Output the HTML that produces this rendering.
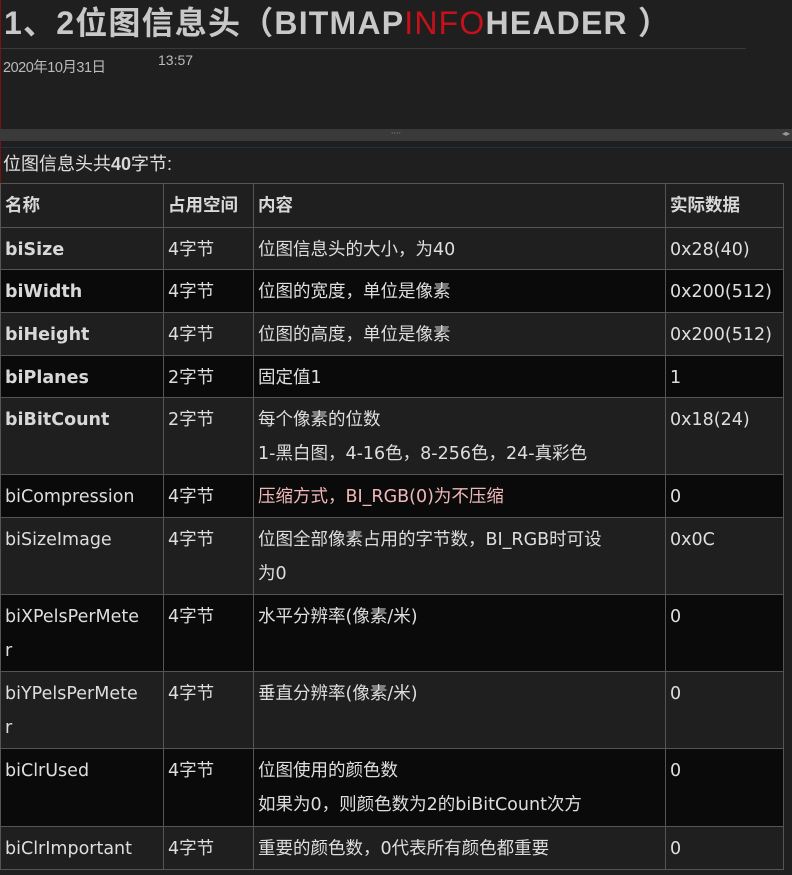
<!DOCTYPE html>
<html><head><meta charset="utf-8"><style>
body{margin:0;width:792px;height:875px;background:#1f1f1f;overflow:hidden;font-family:"DejaVu Sans","Noto Sans CJK SC",sans-serif;color:#dcdcdc;position:relative}
.title{position:absolute;left:4px;top:-2px;font-family:"Liberation Sans","Noto Sans CJK SC",sans-serif;font-size:32px;font-weight:bold;color:#c8c8c8;white-space:nowrap;letter-spacing:1.2px}
.title .r{color:#c8101a;font-weight:normal}
.sep{position:absolute;left:0;top:48px;width:746px;height:1px;background:#3a3a3a}
.date{position:absolute;left:3px;top:56px;font-size:14.5px;color:#bbb;font-family:"Liberation Sans","Noto Sans CJK SC",sans-serif;letter-spacing:-0.5px}
.time{position:absolute;left:158px;top:52px;font-size:14px;color:#bbb;font-family:"Liberation Sans",sans-serif}
.redl{position:absolute;left:0;top:0;width:1px;height:183px;background:#7a1010}
.bar{position:absolute;left:0;top:129px;width:792px;height:12px;background:#3a3a3a;font-size:8px;color:#999;text-align:center;line-height:10px}
.bar span{position:absolute;right:2px;top:0}
.blue{position:absolute;left:0;top:147px;width:792px;height:1px;background:#1e3248}
.intro{position:absolute;left:3px;top:150px;font-size:18px;line-height:28px;color:#e0e0e0;font-family:"Liberation Sans","Noto Sans CJK SC",sans-serif}
table{position:absolute;left:0;top:183px;border-collapse:collapse;width:783px;table-layout:fixed;font-size:17.5px}
td{border:1px solid #555;vertical-align:top;padding:5px 0 0 4px;line-height:34px;color:#dedede;overflow:hidden;word-break:break-all}
tr.g{background:#1f1f1f}tr.k{background:#0a0a0a}
b{color:#d8d8d8}
.pink{color:#f0b8b8}
</style></head><body>
<div class="redl"></div>
<div class="title">1、2位图信息头（BITMAP<span class="r">INFO</span>HEADER ）</div>
<div class="sep"></div>
<div class="date">2020年10月31日</div>
<div class="time">13:57</div>
<div class="bar">····<span>◂▸</span></div>
<div class="blue"></div>
<div class="intro">位图信息头共<b>40</b>字节:</div>
<table>
<colgroup><col style="width:163px"><col style="width:90px"><col style="width:412px"><col style="width:118px"></colgroup>
<tr class="g" style="height:44px"><td><b>名称</b></td><td><b>占用空间</b></td><td><b>内容</b></td><td><b>实际数据</b></td></tr>
<tr class="g" style="height:42px"><td><b>biSize</b></td><td>4字节</td><td>位图信息头的大小，为40</td><td>0x28(40)</td></tr>
<tr class="k" style="height:43px"><td><b>biWidth</b></td><td>4字节</td><td>位图的宽度，单位是像素</td><td>0x200(512)</td></tr>
<tr class="g" style="height:43px"><td><b>biHeight</b></td><td>4字节</td><td>位图的高度，单位是像素</td><td>0x200(512)</td></tr>
<tr class="k" style="height:42px"><td><b>biPlanes</b></td><td>2字节</td><td>固定值1</td><td>1</td></tr>
<tr class="g" style="height:77px"><td><b>biBitCount</b></td><td>2字节</td><td>每个像素的位数<br>1-黑白图，4-16色，8-256色，24-真彩色</td><td>0x18(24)</td></tr>
<tr class="k" style="height:43px"><td>biCompression</td><td>4字节</td><td class="pink">压缩方式，BI_RGB(0)为不压缩</td><td>0</td></tr>
<tr class="g" style="height:77px"><td>biSizeImage</td><td>4字节</td><td>位图全部像素占用的字节数，BI_RGB时可设<br>为0</td><td>0x0C</td></tr>
<tr class="k" style="height:77px"><td>biXPelsPerMete<br>r</td><td>4字节</td><td>水平分辨率(像素/米)</td><td>0</td></tr>
<tr class="g" style="height:77px"><td>biYPelsPerMete<br>r</td><td>4字节</td><td>垂直分辨率(像素/米)</td><td>0</td></tr>
<tr class="k" style="height:78px"><td>biClrUsed</td><td>4字节</td><td>位图使用的颜色数<br>如果为0，则颜色数为2的biBitCount次方</td><td>0</td></tr>
<tr class="g" style="height:43px"><td>biClrImportant</td><td>4字节</td><td>重要的颜色数，0代表所有颜色都重要</td><td>0</td></tr>
</table>
</body></html>
